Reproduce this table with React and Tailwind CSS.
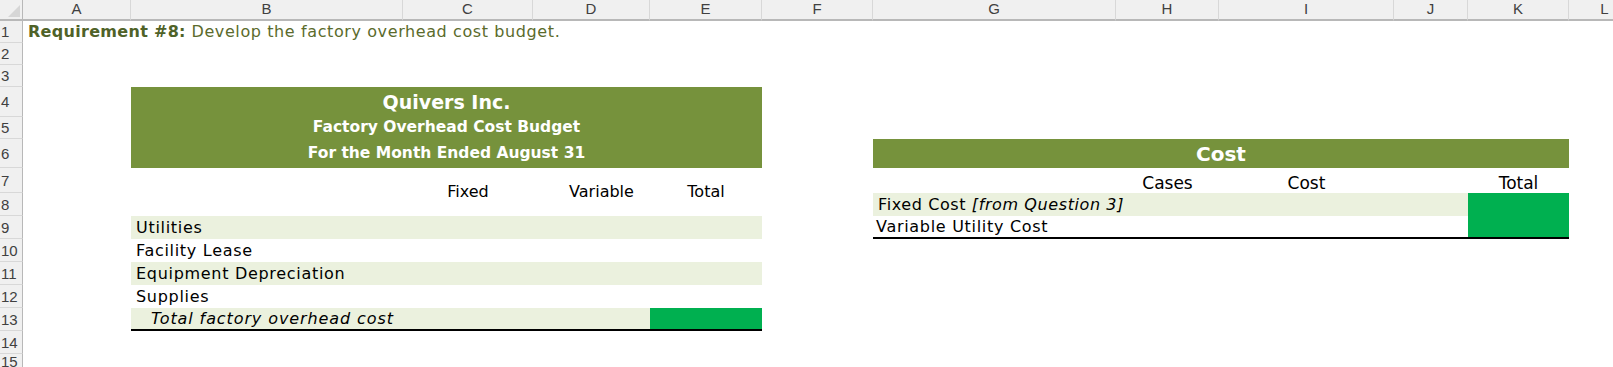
import React from 'react';

const COLS = ['A', 'B', 'C', 'D', 'E', 'F', 'G', 'H', 'I', 'J', 'K', 'L'];

const ROW_NUMS = [
  { n: 1, cls: 'row-start-2' },
  { n: 2, cls: 'row-start-3' },
  { n: 3, cls: 'row-start-4' },
  { n: 4, cls: 'row-start-5' },
  { n: 5, cls: 'row-start-6' },
  { n: 6, cls: 'row-start-7' },
  { n: 7, cls: 'row-start-8' },
  { n: 8, cls: 'row-start-9' },
  { n: 9, cls: 'row-start-10' },
  { n: 10, cls: 'row-start-11' },
  { n: 11, cls: 'row-start-12' },
  { n: 12, cls: 'row-start-13' },
  { n: 13, cls: 'row-start-14' },
  { n: 14, cls: 'row-start-15' },
  { n: 15, cls: 'row-start-16' },
];

const BUDGET_ROWS = [
  { label: 'Utilities', cls: 'row-start-10', fill: true },
  { label: 'Facility Lease', cls: 'row-start-11', fill: false },
  { label: 'Equipment Depreciation', cls: 'row-start-12', fill: true },
  { label: 'Supplies', cls: 'row-start-13', fill: false },
];

const sheetFont = "font-['DejaVu_Sans',sans-serif]";

export default function App() {
  return (
    <div className="w-[1613px] h-[367px] overflow-hidden bg-white">
      <div className="grid w-[1641px] grid-cols-[23px_108px_272px_130px_117px_112px_111px_243px_103px_175px_74px_101px_72px] grid-rows-[21px_22px_22px_22px_30px_22px_29px_25px_23px_23px_23px_23px_23px_23px_23px]">
        {/* corner */}
        <div className="row-start-1 col-start-1 relative bg-[#f0f0f0] border-b-2 border-r border-[#b8b8b8]">
          <svg className="absolute right-[2px] bottom-[2px]" width="12" height="12" viewBox="0 0 12 12">
            <polygon points="12,0 12,12 0,12" fill="#d6d6d6" />
          </svg>
        </div>

        {/* column headers */}
        {COLS.map((c) => (
          <div
            key={c}
            className="row-start-1 flex items-center justify-center bg-[#f0f0f0] border-r border-r-[#d8d8d8] border-b-2 border-b-[#b8b8b8] font-['Liberation_Sans',sans-serif] text-[15px] text-[#404040]"
          >
            {c}
          </div>
        ))}

        {/* row headers */}
        {ROW_NUMS.map((r) => (
          <div
            key={r.n}
            className={`${r.cls} col-start-1 flex items-center pl-[1px] bg-[#f0f0f0] border-r border-r-[#b8b8b8] border-b border-b-[#d8d8d8] font-['Liberation_Sans',sans-serif] text-[15px] leading-none text-[#404040]`}
          >
            {r.n}
          </div>
        ))}

        {/* row 1 */}
        <div className={`row-start-2 col-start-2 col-span-6 flex items-center pl-[5px] whitespace-nowrap text-[16px] tracking-[0.6px] text-[#4f6228] ${sheetFont}`}>
          <span className="font-bold tracking-[0.3px]">Requirement #8:</span>
          <span className="text-[#5b6b2c]">&nbsp;Develop the factory overhead cost budget.</span>
        </div>

        {/* budget title block */}
        <div className={`row-start-5 col-start-3 col-span-4 flex items-center justify-center bg-[#76923c] text-white font-bold text-[19px] ${sheetFont}`}>
          Quivers Inc.
        </div>
        <div className={`row-start-6 col-start-3 col-span-4 flex items-center justify-center bg-[#76923c] text-white font-bold text-[15.5px] ${sheetFont}`}>
          Factory Overhead Cost Budget
        </div>
        <div className={`row-start-7 col-start-3 col-span-4 flex items-center justify-center bg-[#76923c] text-white font-bold text-[15.5px] ${sheetFont}`}>
          For the Month Ended August 31
        </div>

        {/* cost title */}
        <div className={`row-start-7 col-start-8 col-span-5 flex items-center justify-center bg-[#76923c] text-white font-bold text-[20px] ${sheetFont}`}>
          Cost
        </div>

        {/* budget column headings */}
        <div className={`row-start-8 row-span-2 col-start-4 flex items-center justify-center text-[16px] text-black ${sheetFont}`}>
          Fixed
        </div>
        <div className={`row-start-8 row-span-2 col-start-5 flex items-center justify-center pl-[20px] text-[16px] text-black ${sheetFont}`}>
          Variable
        </div>
        <div className={`row-start-8 row-span-2 col-start-6 flex items-center justify-center text-[16px] text-black ${sheetFont}`}>
          Total
        </div>

        {/* cost column headings */}
        <div className={`row-start-8 col-start-9 flex items-end justify-center text-[17px] leading-[20px] text-black ${sheetFont}`}>
          Cases
        </div>
        <div className={`row-start-8 col-start-10 flex items-end justify-center text-[17px] leading-[20px] text-black ${sheetFont}`}>
          Cost
        </div>
        <div className={`row-start-8 col-start-12 flex items-end justify-center text-[17px] leading-[20px] text-black ${sheetFont}`}>
          Total
        </div>

        {/* budget rows */}
        {BUDGET_ROWS.map((r) => (
          <div
            key={r.label}
            className={`${r.cls} col-start-3 col-span-4 flex items-center pl-[5px] whitespace-nowrap text-[16px] tracking-[0.7px] text-black ${sheetFont} ${r.fill ? 'bg-[#ebf1de]' : ''}`}
          >
            {r.label}
          </div>
        ))}
        <div className={`row-start-14 col-start-3 col-span-3 flex items-center pl-[20px] whitespace-nowrap italic text-[16px] tracking-[0.9px] text-black bg-[#ebf1de] border-b-2 border-black ${sheetFont}`}>
          Total factory overhead cost
        </div>
        <div className="row-start-14 col-start-6 bg-[#00b050] border-b-2 border-black" />

        {/* cost rows */}
        <div className={`row-start-9 col-start-8 col-span-4 flex items-center pl-[5px] whitespace-nowrap text-[16px] tracking-[0.6px] text-black bg-[#ebf1de] ${sheetFont}`}>
          Fixed Cost&nbsp;<span className="italic">[from Question 3]</span>
        </div>
        <div className={`row-start-10 col-start-8 col-span-4 flex items-center pl-[3px] whitespace-nowrap text-[16px] tracking-[0.7px] text-black border-b-2 border-black ${sheetFont}`}>
          Variable Utility Cost
        </div>
        <div className="row-start-9 row-span-2 col-start-12 bg-[#00b050] border-b-2 border-black" />
      </div>
    </div>
  );
}
